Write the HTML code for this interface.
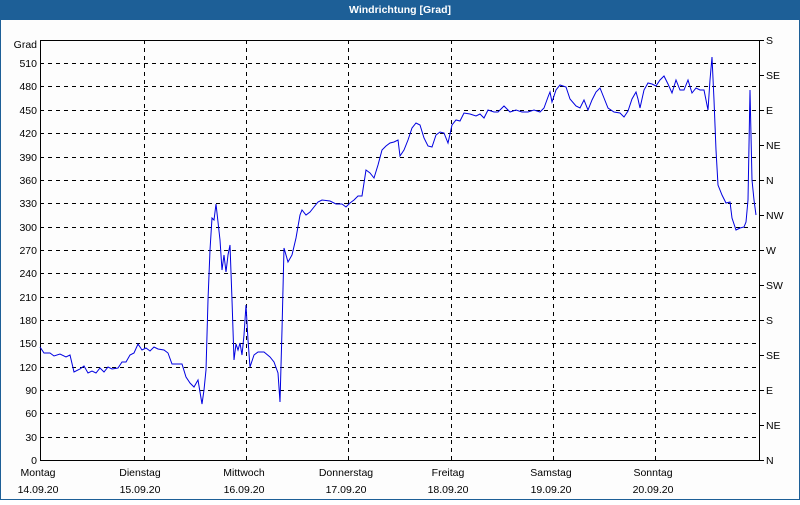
<!DOCTYPE html>
<html><head><meta charset="utf-8"><style>
body{margin:0;width:800px;height:500px;overflow:hidden;background:#fff;font-family:"Liberation Sans",sans-serif;}
</style></head><body>
<svg width="800" height="500" xmlns="http://www.w3.org/2000/svg" font-family="Liberation Sans, sans-serif" font-size="10.5">
<rect x="0" y="0" width="800" height="500" fill="#1d5f97"/>
<rect x="1" y="20" width="798" height="479" fill="#fdfdfd"/>
<text x="400" y="13" fill="#fff" font-weight="bold" text-anchor="middle" font-size="10.5">Windrichtung [Grad]</text>
<g stroke="#000" stroke-dasharray="4,4" stroke-width="1">
<path d="M40 63.5H760M40 86.5H760M40 110.5H760M40 133.5H760M40 157.5H760M40 180.5H760M40 203.5H760M40 227.5H760M40 250.5H760M40 273.5H760M40 297.5H760M40 320.5H760M40 343.5H760M40 367.5H760M40 390.5H760M40 413.5H760M40 437.5H760"/>
<path d="M144.5 40V460M246.5 40V460M348.5 40V460M451.5 40V460M553.5 40V460M655.5 40V460"/>
</g>
<rect x="40.5" y="40.5" width="719" height="420" fill="none" stroke="#000"/>
<path stroke="#000" d="M760 40.5h4M760 75.5h4M760 110.5h4M760 145.5h4M760 180.5h4M760 215.5h4M760 250.5h4M760 285.5h4M760 320.5h4M760 355.5h4M760 390.5h4M760 425.5h4M760 460.5h4"/>
<g fill="#000" text-anchor="end">
<text x="37" y="48">Grad</text>
<text x="37" y="67">510</text><text x="37" y="90">480</text><text x="37" y="114">450</text><text x="37" y="137">420</text><text x="37" y="161">390</text><text x="37" y="184">360</text><text x="37" y="207">330</text><text x="37" y="231">300</text><text x="37" y="254">270</text><text x="37" y="277">240</text><text x="37" y="301">210</text><text x="37" y="324">180</text><text x="37" y="347">150</text><text x="37" y="371">120</text><text x="37" y="394">90</text><text x="37" y="417">60</text><text x="37" y="441">30</text><text x="37" y="464">0</text>
</g>
<g fill="#000">
<text x="766" y="44">S</text><text x="766" y="79">SE</text><text x="766" y="114">E</text><text x="766" y="149">NE</text><text x="766" y="184">N</text><text x="766" y="219">NW</text><text x="766" y="254">W</text><text x="766" y="289">SW</text><text x="766" y="324">S</text><text x="766" y="359">SE</text><text x="766" y="394">E</text><text x="766" y="429">NE</text><text x="766" y="464">N</text>
</g>
<g fill="#000" text-anchor="middle">
<text x="38" y="476">Montag</text><text x="38" y="493">14.09.20</text>
<text x="140" y="476">Dienstag</text><text x="140" y="493">15.09.20</text>
<text x="244" y="476">Mittwoch</text><text x="244" y="493">16.09.20</text>
<text x="346" y="476">Donnerstag</text><text x="346" y="493">17.09.20</text>
<text x="448" y="476">Freitag</text><text x="448" y="493">18.09.20</text>
<text x="551" y="476">Samstag</text><text x="551" y="493">19.09.20</text>
<text x="653" y="476">Sonntag</text><text x="653" y="493">20.09.20</text>
</g>
<polyline fill="none" stroke="#0000e0" stroke-width="1" points="40,347 44,353 50,353 54,356 60,354 66,357 70,355 74,372 80,369 84,366 88,373 92,371 96,373 100,368 104,372 108,367 112,369 118,368 122,362 126,362 130,355 134,353 138,344 142,350 146,348 150,351 154,347 158,349 164,350 168,353 172,364 178,364 182,364 186,377 190,383 194,387 198,380 200,392 202,404 204,390 206,370 208,300 210,250 212,218 214,220 216,204 218,222 220,240 222,270 224,255 226,272 228,255 230,245 232,300 234,360 236,344 238,350 240,343 242,355 244,335 246,305 248,340 250,367 254,355 258,352 264,352 270,357 274,362 278,373 280,402 282,330 284,248 286,255 288,262 292,255 296,238 300,215 302,210 306,215 310,212 314,207 318,202 322,200 330,201 336,204 342,204 346,207 350,203 354,200 358,196 362,196 366,170 370,173 374,178 378,165 382,150 386,146 390,143 394,142 398,140 400,156 404,150 408,140 412,128 416,123 420,125 424,138 428,146 432,147 436,135 440,132 444,133 448,143 452,125 456,120 460,121 464,113 470,114 476,116 480,114 484,118 488,110 494,112 498,112 504,106 510,112 516,110 522,112 528,112 534,110 540,112 544,108 548,97 550,92 552,102 556,90 560,85 566,87 570,99 576,106 580,108 584,100 588,110 592,100 596,92 600,88 604,98 608,108 614,112 620,113 624,117 628,111 632,99 636,92 638,99 640,108 644,90 648,83 652,84 656,86 660,80 664,76 668,84 672,93 676,80 680,90 684,90 688,80 692,93 696,88 700,90 704,90 708,110 710,80 712,57 714,100 716,150 718,185 722,195 726,203 730,202 732,218 736,230 740,228 744,227 746,222 748,200 750,90 752,180 754,200 756,215"/>
</svg>
</body></html>
